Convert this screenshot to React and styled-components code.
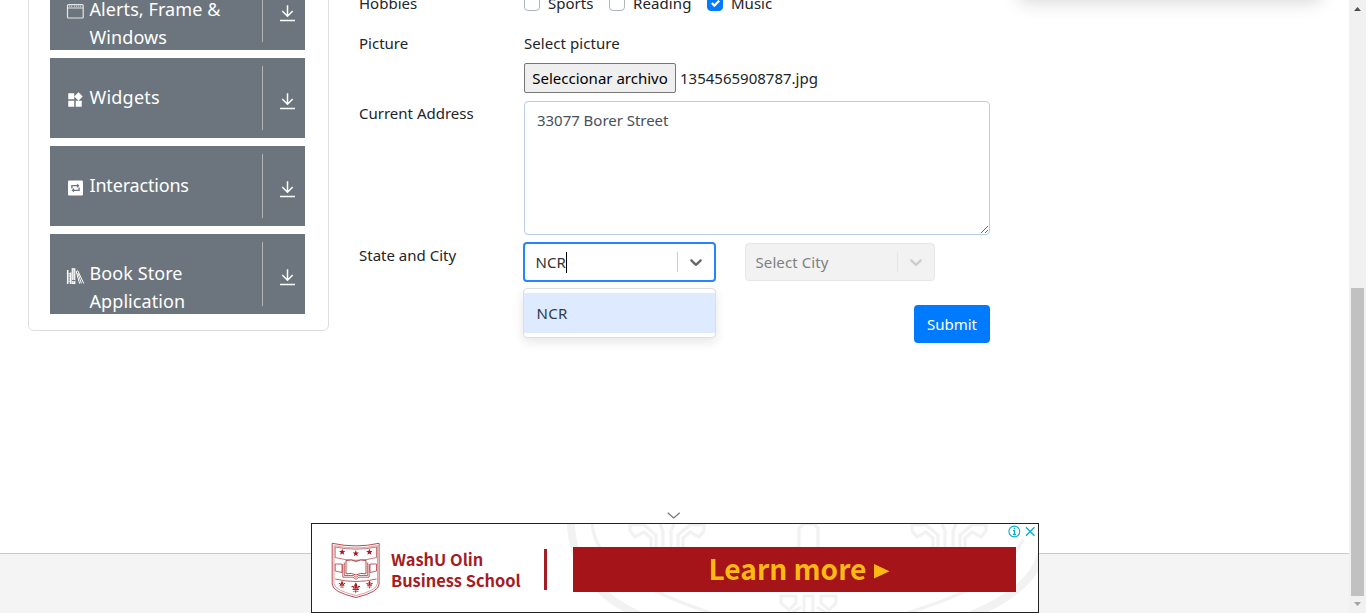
import React from 'react';
import styled, { createGlobalStyle } from 'styled-components';
import { MdWidgets } from 'react-icons/md';

const GlobalStyle = createGlobalStyle`
  *, *::before, *::after { box-sizing: border-box; }
  body {
    margin: 0;
    overflow: hidden;
    background: #fff;
    color: #212529;
    font-family: "Noto Sans", "Open Sans", sans-serif;
    font-size: 15px;
    line-height: 24px;
  }
`;

const Viewport = styled.div`
  display: flex;
  height: 613px;
  overflow: hidden;
`;

const Page = styled.div`
  flex: 1;
  display: flex;
  flex-direction: column;
`;

const Body = styled.main`
  height: 553px;
  display: flex;
  align-items: flex-start;
  padding-left: 28px;
`;

const Footer = styled.footer`
  flex: 1;
  background: #f4f4f4;
  border-top: 1px solid #cacaca;
`;

/* Left navigation */
const Sidebar = styled.nav`
  width: 301px;
  margin-top: -52px;
  padding: 21px 23px 16px 21px;
  border: 1px solid #dcdfe1;
  border-radius: 0 0 6px 6px;
  display: flex;
  flex-direction: column;
  gap: 8px;
`;

const Group = styled.div`
  height: 80px;
  padding: 8px 0 0 16px;
  display: flex;
  overflow: hidden;
  background: #6c757d;
  color: #fff;
`;

const GroupIcon = styled.span`
  width: 23.5px;
  padding-top: 25px;
  svg { display: block; }
`;

const GroupTitle = styled.span`
  width: 173.5px;
  height: 64px;
  padding-top: 17px;
  border-right: 1px solid #b3b5b7;
  font-size: 18px;
  line-height: 28px;
  letter-spacing: ${(p) => p.$track || 0}px;
`;

const GroupArrow = styled.span`
  padding: 26px 0 0 16px;
  svg { display: block; }
`;

/* Form */
const Form = styled.form`
  width: 631px;
  margin: -9px 0 0 30px;
  display: flex;
  flex-direction: column;
`;

const Row = styled.div`
  display: flex;
  align-items: flex-start;
  height: ${(p) => p.$h}px;
`;

const Label = styled.span`
  width: 165px;
  flex: none;
  padding-top: ${(p) => p.$top || 0}px;
`;

const Text = styled.span`
  white-space: nowrap;
  letter-spacing: ${(p) => p.$track || 0}px;
`;

const Check = styled.label`
  display: flex;
  align-items: center;
  gap: 8px;
  width: ${(p) => p.$w}px;
`;

const Box = styled.span`
  width: 16px;
  height: 16px;
  flex: none;
  border: 1px solid ${(p) => (p.$on ? '#007bff' : '#adb5bd')};
  border-radius: 4px;
  background: ${(p) => (p.$on ? '#007bff' : '#fff')};
  display: grid;
  place-items: center;
`;

const FileField = styled.div`
  display: flex;
  flex-direction: column;
  gap: 8px;
`;

const FileLine = styled.div`
  display: flex;
  align-items: center;
  gap: 4px;
`;

const FileButton = styled.button`
  width: 152px;
  height: 30px;
  padding: 0;
  border: 1px solid #767676;
  border-radius: 2px;
  background: #efefef;
  color: #000;
  font: inherit;
  white-space: nowrap;
`;

const Address = styled.textarea`
  width: 466px;
  height: 134px;
  padding: 6px 12px;
  border: 1px solid #b9cde3;
  border-radius: 4px;
  color: #495057;
  font: inherit;
  letter-spacing: -0.03px;
  resize: vertical;
  outline: none;
`;

const SelectWrap = styled.div`
  position: relative;
  margin: ${(p) => (p.$focus ? '0 29px 0 -1px' : '1px 0 0')};
`;

const Select = styled.div`
  width: ${(p) => (p.$focus ? 193 : 190)}px;
  height: ${(p) => (p.$focus ? 40 : 38)}px;
  padding-left: ${(p) => (p.$focus ? 10.5 : 9.5)}px;
  display: flex;
  align-items: center;
  border: ${(p) => (p.$focus ? '2px solid #2684ff' : '1px solid #e6e6e6')};
  border-radius: 4px;
  background: ${(p) => (p.$focus ? '#fff' : '#f2f2f2')};
  color: ${(p) => (p.$focus ? '#333' : '#808080')};
`;

const Caret = styled.i`
  width: 1px;
  height: 21px;
  background: #000;
`;

const Indicator = styled.span`
  margin-left: auto;
  height: 20px;
  width: 37px;
  display: grid;
  place-items: center;
  border-left: 1px solid ${(p) => (p.$dim ? '#e6e6e6' : '#ccc')};
  color: ${(p) => (p.$dim ? '#ccc' : '#666')};
`;

const Menu = styled.div`
  position: absolute;
  top: 46px;
  left: 0;
  width: 193px;
  height: 50px;
  padding: 4px 0;
  border: 1px solid #dcdee2;
  border-radius: 4px;
  background: #fff;
  box-shadow: 0 4px 11px rgba(0, 0, 0, 0.1);
`;

const Option = styled.div`
  height: 40px;
  padding: 8px 12.5px;
  background: #deeaff;
  color: #333a42;
  letter-spacing: 0.3px;
`;

const Submit = styled.button`
  align-self: flex-end;
  width: 76px;
  height: 38px;
  padding: 0;
  border: 0;
  border-radius: 4px;
  background: #007bff;
  color: #fff;
  font: inherit;
`;

/* Banner whose lower shadow reaches into the visible area */
const SideBanner = styled.aside`
  width: 300px;
  height: 60px;
  margin: -63px 0 0 30px;
  background: #fff;
  box-shadow: 0 3px 20px rgba(0, 0, 0, 0.2);
`;

/* Scrollbar */
const Scrollbar = styled.div`
  width: 17px;
  background: #f1f1f1;
  display: flex;
  flex-direction: column;
  align-items: center;
  svg { display: block; }
`;

const Thumb = styled.div`
  width: 13px;
  height: 308px;
  margin: 271px 0 0 0;
  background: #c1c1c1;
`;

/* Anchored advertisement */
const AdDock = styled.div`
  position: fixed;
  left: 311px;
  bottom: 0;
  width: 728px;
  display: flex;
  flex-direction: column;
`;

const AdToggle = styled.div`
  height: 11px;
  padding-left: 356px;
  svg { display: block; }
`;

const Ad = styled.div`
  position: relative;
  height: 90px;
  border: 1px solid #222;
  background: #fff;
  display: flex;
  align-items: flex-start;
  overflow: hidden;
`;

const Watermark = styled.svg`
  position: absolute;
  left: -1px;
  top: -1px;
`;

const Crest = styled.svg`
  position: relative;
  margin: 18px 0 0 19px;
  flex: none;
`;

const School = styled.div`
  position: relative;
  width: 156px;
  height: 41px;
  margin: 25px 0 0 10px;
  border-right: 3px solid #a51c23;
  color: #a51c23;
  font-family: "Noto Sans CJK SC", "Noto Sans", sans-serif;
  font-size: 16.4px;
  font-weight: 700;
  line-height: 20.5px;
  white-space: nowrap;
  span { display: block; }
`;

const LearnMore = styled.div`
  position: relative;
  width: 443px;
  height: 45px;
  margin: 23px 0 0 26px;
  display: flex;
  align-items: center;
  justify-content: center;
  gap: 8px;
  background: #a41418;
  color: #fdb913;
  font-family: "Noto Sans CJK SC", "Noto Sans", sans-serif;
  font-size: 28.1px;
  font-weight: 700;
  line-height: 40px;
  padding-left: 10px;
  white-space: nowrap;
  span { height: 44px; }
  svg { margin-top: 3px; }
`;

const AdChoices = styled.svg`
  position: absolute;
  right: 0;
  top: 0;
`;

const WindowIcon = () => (
  <svg width="18" height="17" viewBox="0 0 18 17" fill="none" stroke="#e4e6e8">
    <rect x="1.5" y="1.6" width="15.7" height="13.4" rx="1" strokeWidth="1.2" />
    <path d="M1.5 5H17" strokeWidth="1" />
    <path d="M3 3.3h4M8 3.3h8" strokeWidth="1.5" strokeDasharray="1.2 0.8" opacity=".65" />
  </svg>
);

const RepeatIcon = () => (
  <svg width="18" height="18" viewBox="0 0 18 18">
    <g transform="translate(.5 0)">
      <rect x="1.5" y="1.5" width="15" height="15" rx="1.2" fill="#fff" />
      <path d="M5.4 9.4V6.7H10.6M12.6 8.6V11.3H7.4" fill="none" stroke="#6c757d" strokeWidth="1.3" />
      <path d="M10.4 4.5L13 6.7L10.4 8.9ZM7.6 9.1L5 11.3L7.6 13.5Z" fill="#6c757d" />
    </g>
  </svg>
);

const BooksIcon = () => (
  <svg width="19" height="18" viewBox="0 0 19 18" fill="none" stroke="#fff">
    <path d="M1.7 3V17M4.6 5.5V17" strokeWidth="1.5" />
    <path d="M3.2 6v9" strokeWidth="1.2" strokeDasharray="1.4 1.2" opacity=".8" />
    <rect x="6.2" y="1.8" width="2.6" height="14.7" strokeWidth="1.1" fill="#c9cdd0" />
    <path d="M6 13.5h3.4" strokeWidth="1" stroke="#6c757d" />
    <path d="M10.2 4.4L13.6 16.6M11.8 3.8L17.8 16.5M10.2 4.4l1.6-.6M15.4 16.4l-3.6-10.4" strokeWidth="1" />
  </svg>
);

const DownIcon = () => (
  <svg width="17" height="18" viewBox="0 0 17 18" fill="none" stroke="#fff">
    <path d="M8.5 1.3V12M3.3 7L8.5 12.2L13.7 7" strokeWidth="1.5" />
    <path d="M1 16.5H16" strokeWidth="1.5" />
  </svg>
);

const Chevron = () => (
  <svg width="20" height="20" viewBox="0 0 20 20" fill="currentColor">
    <path d="M4.516 7.548c0.436-0.446 1.043-0.481 1.576 0l3.908 3.747 3.908-3.747c0.533-0.481 1.141-0.446 1.574 0 0.436 0.445 0.408 1.197 0 1.615-0.406 0.418-4.695 4.502-4.695 4.502-0.217 0.223-0.502 0.335-0.787 0.335s-0.57-0.112-0.789-0.335c0 0-4.287-4.084-4.695-4.502s-0.436-1.17 0-1.615z" />
  </svg>
);

const groups = [
  { title: 'Alerts, Frame & Windows', icon: <WindowIcon />, track: 0.08 },
  { title: 'Widgets', icon: <MdWidgets size={18} />, track: 0.22 },
  { title: 'Interactions', icon: <RepeatIcon />, track: -0.18 },
  { title: 'Book Store Application', icon: <BooksIcon />, track: 0.08 },
];

const star = 'M0-3.3L.9-1 3.2-1 1.4.5 2 2.8 0 1.5-2 2.8-1.4.5-3.2-1-.9-1Z';

const Fleur = ({ x, y, s = 1 }) => (
  <g transform={`translate(${x} ${y}) scale(${s})`} fill="#a51c23">
    <path d="M0-5C2-2.5 1.4-1 .6 .6H-.6C-1.4-1-2-2.5 0-5Z" />
    <path d="M-1 .6C-1.3-3-4.6-2.7-4-.4 -3-1.4-2.4-.6-2.2.6ZM1 .6C1.3-3 4.6-2.7 4-.4 3-1.4 2.4-.6 2.2.6Z" />
    <rect x="-3" y=".8" width="6" height="1" />
    <path d="M0 5L-1 2.2H1ZM-1 2.2L-2.8 3.6-1.5 3.6ZM1 2.2L2.8 3.6 1.5 3.6Z" />
  </g>
);

const CrestDrawing = () => (
  <Crest width="50" height="57" viewBox="0 0 50 57" fill="none" stroke="#a51c23" strokeWidth=".8">
    <path d="M1.2 1.3Q25 6.5 48.1 1.3V42Q48.1 50 25 55.5 1.2 50 1.2 42Z" />
    <path d="M3 3.6Q25 8.2 46.5 3.6V41.5Q46 48.5 25 53.5 4 48.5 3 41.5Z" strokeWidth=".4" />
    <path d="M4.2 5Q25 9.4 45.5 5V15.6Q25 21 4.2 15.6Z" strokeWidth=".6" />
    <path d="M4.2 37Q25 42 45.5 37M4.2 22H11V30.5L4.2 29ZM45.5 22H39V30.5L45.5 29Z" strokeWidth=".7" />
    <path d="M15 18.5Q21 17 25 19.5 29 17 35 18.5V31.8Q29 30.5 25 33 21 30.5 15 31.8Z" fill="#fff" />
    <path d="M13.3 20.5V33.5H22.5L25 35.3 27.5 33.5H36.7V20.5M11.8 22V35.2H22L25 37.3 28 35.2H38.2V22" strokeWidth=".7" />
    <g fill="#a51c23" stroke="none">
      <path d={star} transform="translate(11.2 10)" />
      <path d={star} transform="translate(24.8 11.4)" />
      <path d={star} transform="translate(38.4 10)" />
    </g>
    <g stroke="none">
      <Fleur x={11} y={42.7} s={0.8} />
      <Fleur x={24.8} y={46} s={1.08} />
      <Fleur x={38.5} y={42.7} s={0.8} />
    </g>
  </Crest>
);

const PlumeMark = ({ x }) => (
  <g transform={`translate(${x} 0)`}>
    <path d="M-37 1V8L-32 14 -23 9 -16 15V24M-37 2H-23L-11 12V24M37 1V8L32 14 23 9 16 15V24M37 2H23L11 12V24M-7 1L-4 8V24M7 1L4 8V24" />
  </g>
);

const WatermarkDrawing = () => (
  <Watermark width="728" height="90" viewBox="0 0 728 90" fill="none" stroke="#f2f2f2" strokeWidth="3.2">
    <path d="M260 0C261 40 283 72 328 92" strokeWidth="8" />
    <path d="M281 0C283 34 318 63 400 90" />
    <PlumeMark x={356} />
    <PlumeMark x={638} />
    <path d="M488 24V5L493 1H503L507 5V24" />
    <path d="M470 73H485V80L478 87 470 80ZM510 73H525V80L518 87 510 80ZM493 90V73H502V90M480 90L490 84M515 90L506 84" />
    <path d="M597 90C650 72 690 58 712 17" />
    <path d="M660 92C704 74 724 54 730 32" strokeWidth="8" />
  </Watermark>
);

export default function App() {
  return (
    <>
      <GlobalStyle />
      <Viewport>
        <Page>
          <Body>
            <Sidebar>
              {groups.map((g) => (
                <Group key={g.title}>
                  <GroupIcon>{g.icon}</GroupIcon>
                  <GroupTitle $track={g.track}>{g.title}</GroupTitle>
                  <GroupArrow><DownIcon /></GroupArrow>
                </Group>
              ))}
            </Sidebar>
            <Form onSubmit={(e) => e.preventDefault()}>
              <Row $h={40}>
                <Label>Hobbies</Label>
                <Check $w={85}><Box />Sports</Check>
                <Check $w={98}><Box /><Text $track={0.1}>Reading</Text></Check>
                <Check $w={80}>
                  <Box $on>
                    <svg width="9" height="9" viewBox="0 0 8 8">
                      <path fill="#fff" d="M6.564.75l-3.59 3.612-1.538-1.55L0 4.26 2.974 7.25 8 2.193z" />
                    </svg>
                  </Box>
                  Music
                </Check>
              </Row>
              <Row $h={70}>
                <Label>Picture</Label>
                <FileField>
                  <Text $track={0.06}>Select picture</Text>
                  <FileLine>
                    <FileButton type="button">Seleccionar archivo</FileButton>
                    <Text>1354565908787.jpg</Text>
                  </FileLine>
                </FileField>
              </Row>
              <Row $h={141}>
                <Label>Current Address</Label>
                <Address defaultValue="33077 Borer Street" spellCheck={false} />
              </Row>
              <Row $h={63}>
                <Label $top={1}>State and City</Label>
                <SelectWrap $focus>
                  <Select $focus>
                    <Text>NCR</Text>
                    <Caret />
                    <Indicator><Chevron /></Indicator>
                  </Select>
                  <Menu><Option>NCR</Option></Menu>
                </SelectWrap>
                <SelectWrap>
                  <Select>
                    <Text $track={0.1}>Select City</Text>
                    <Indicator $dim><Chevron /></Indicator>
                  </Select>
                </SelectWrap>
              </Row>
              <Submit>Submit</Submit>
            </Form>
            <SideBanner />
          </Body>
          <Footer />
        </Page>
        <Scrollbar>
          <svg width="17" height="17" viewBox="0 0 17 17"><path d="M5 11L8.5 7L12 11Z" fill="#505050" /></svg>
          <Thumb />
          <svg width="17" height="17" viewBox="0 0 17 17"><path d="M5 6L8.5 10L12 6Z" fill="#a3a3a3" /></svg>
        </Scrollbar>
      </Viewport>
      <AdDock>
        <AdToggle>
          <svg width="14" height="8" viewBox="0 0 14 8" fill="none" stroke="#757575" strokeWidth="1.2">
            <path d="M.7 .8L6.7 6L12.7 .8" />
          </svg>
        </AdToggle>
        <Ad>
          <WatermarkDrawing />
          <CrestDrawing />
          <School>
            <span>WashU Olin</span>
            <span>Business School</span>
          </School>
          <LearnMore>
            <span>Learn more</span>
            <svg width="16" height="15" viewBox="0 0 16 15"><path d="M0 0L15.5 7.2L0 14.5Z" fill="#fdb913" /></svg>
          </LearnMore>
          <AdChoices width="32" height="16" viewBox="0 0 32 16" fill="none" stroke="#00aecd" strokeWidth="1.3">
            <circle cx="8.3" cy="7.5" r="5.4" strokeWidth="1.1" />
            <path d="M7 6.6H8.5V10.4M7 10.5H10M8.4 3.8V5.2" />
            <path d="M20 3.2L28.5 11.7M28.5 3.2L20 11.7" />
          </AdChoices>
        </Ad>
      </AdDock>
    </>
  );
}
